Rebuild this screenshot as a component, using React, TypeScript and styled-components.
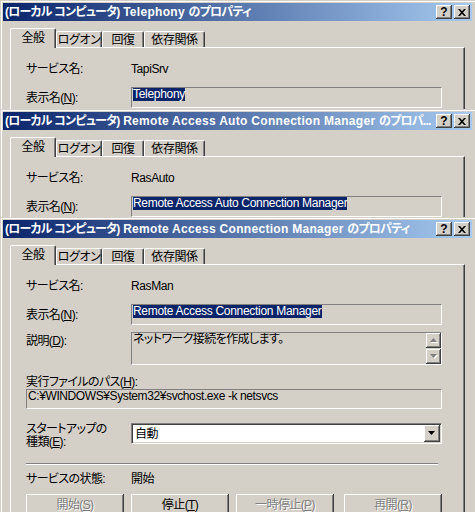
import React from 'react'
import styled, { createGlobalStyle } from 'styled-components'

const face = '#D4D0C8'
const shadow = '#808080'
const dark = '#404040'
const selection = '#0A246A'

const GlobalStyle = createGlobalStyle`
  html, body {
    margin: 0;
    padding: 0;
    background: ${face};
  }
  body {
    font-family: "Liberation Sans", "Noto Sans CJK JP", sans-serif;
    font-size: 12px;
    font-feature-settings: "palt";
    letter-spacing: -0.4px;
    color: #000;
  }
  * {
    box-sizing: border-box;
  }
`

const Desktop = styled.div`
  width: 475px;
  height: 512px;
  overflow: hidden;
  display: flex;
  flex-direction: column;
  background: ${face};
`

const Frame = styled.div<{ $height?: number }>`
  flex: ${({ $height }) => ($height ? 'none' : '1')};
  height: ${({ $height }) => ($height ? `${$height}px` : 'auto')};
  min-height: 0;
  width: 475px;
  overflow: hidden;
  padding: 3px 3px 0 3px;
  background: ${face};
  box-shadow: inset 1px 1px 0 ${face}, inset 2px 2px 0 #fff;
  display: flex;
  flex-direction: column;
`

const TitleBar = styled.div`
  flex: none;
  height: 18px;
  display: flex;
  align-items: center;
  padding: 0 2px 0 2px;
  background: linear-gradient(to right, ${selection}, #a6caf0);
  color: #fff;
  font-weight: bold;
`

const Caption = styled.span`
  flex: 1;
  min-width: 0;
  white-space: nowrap;
  overflow: hidden;
  letter-spacing: 0.3px;
  line-height: 18px;
`

// kana in the caption runs narrower than the latin part
const CaptionJp = styled.span`
  letter-spacing: -0.8px;
`

const CaptionButton = styled.div<{ $gap?: number }>`
  flex: none;
  width: 16px;
  height: 14px;
  margin-left: ${({ $gap }) => $gap ?? 0}px;
  background: ${face};
  box-shadow: inset -1px -1px 0 ${dark}, inset 1px 1px 0 #fff, inset -2px -2px 0 ${shadow};
  display: flex;
  align-items: center;
  justify-content: center;
  color: #000;
  font-family: "Liberation Sans", sans-serif;
  font-size: 12px;
  font-weight: bold;
  letter-spacing: 0;
  line-height: 14px;
`

const Body = styled.div`
  flex: 1;
  min-height: 0;
  display: flex;
  flex-direction: column;
  padding: 7px 7px 0 7px;
`

const TabStrip = styled.div`
  flex: none;
  height: 19px;
  display: flex;
  align-items: flex-start;
  position: relative;
  z-index: 1;
`

const Tab = styled.div<{ $active?: boolean; $w: number }>`
  width: ${({ $w }) => $w}px;
  height: ${({ $active }) => ($active ? 20 : 16)}px;
  margin-top: ${({ $active }) => ($active ? 0 : 3)}px;
  background: ${face};
  border-top: 1px solid #fff;
  border-left: 1px solid #fff;
  border-right: 1px solid ${dark};
  border-radius: 2px 2px 0 0;
  box-shadow: inset -1px 0 0 ${shadow};
  display: flex;
  justify-content: center;
  padding-top: ${({ $active }) => ($active ? 3 : 2)}px;
  line-height: 13px;
  white-space: nowrap;
`

const Panel = styled.div`
  flex: 1;
  min-height: 0;
  background: ${face};
  border-top: 1px solid #fff;
  border-left: 1px solid #fff;
  border-right: 1px solid ${dark};
  box-shadow: inset -1px 0 0 ${shadow};
  padding: 11px 22px 0 15px;
  display: flex;
  flex-direction: column;
`

const Row = styled.div<{ $top?: number; $h?: number; $align?: string }>`
  display: grid;
  grid-template-columns: 105px 1fr;
  align-items: ${({ $align }) => $align ?? 'center'};
  margin-top: ${({ $top }) => $top ?? 0}px;
  min-height: ${({ $h }) => $h ?? 14}px;
`

const Label = styled.div<{ $pad?: number }>`
  line-height: 14px;
  padding-top: ${({ $pad }) => $pad ?? 0}px;
  white-space: nowrap;
  letter-spacing: -0.6px;
`

const Value = styled.div`
  line-height: 14px;
  white-space: nowrap;
`

const StackLabel = styled.div`
  line-height: 13px;
  white-space: nowrap;
  letter-spacing: -0.6px;
`

const Wide = styled.div<{ $top?: number }>`
  margin-top: ${({ $top }) => $top ?? 0}px;
`

const Field = styled.div<{ $h: number }>`
  height: ${({ $h }) => $h}px;
  background: ${face};
  border-top: 1px solid ${shadow};
  border-left: 1px solid ${shadow};
  border-right: 1px solid #fff;
  border-bottom: 1px solid #fff;
  padding: 0 1px;
  line-height: 13px;
  white-space: nowrap;
  overflow: hidden;
`

const Selected = styled.span`
  background: ${selection};
  color: #fff;
  display: inline-block;
  line-height: 13px;
  letter-spacing: -0.3px;
`

const Memo = styled(Field)`
  display: flex;
  padding: 0 0 0 1px;
`

const MemoText = styled.div`
  flex: 1;
  min-width: 0;
  letter-spacing: -0.6px;
`

const ScrollBar = styled.div`
  flex: none;
  width: 15px;
  display: flex;
  flex-direction: column;
  justify-content: space-between;
`

const ArrowButton = styled.div`
  width: 15px;
  height: 15px;
  background: ${face};
  box-shadow: inset -1px -1px 0 ${dark}, inset 1px 1px 0 #fff, inset -2px -2px 0 ${shadow};
  display: flex;
  align-items: center;
  justify-content: center;
`

const Combo = styled.div`
  height: 21px;
  background: #fff;
  border-top: 1px solid ${shadow};
  border-left: 1px solid ${shadow};
  border-right: 1px solid #fff;
  border-bottom: 1px solid #fff;
  box-shadow: inset 1px 1px 0 ${dark}, inset -1px -1px 0 ${face};
  display: flex;
  align-items: center;
  padding: 1px 1px 1px 3px;
`

const ComboText = styled.div`
  flex: 1;
  line-height: 14px;
`

const DropButton = styled(ArrowButton)`
  width: 16px;
  height: 17px;
`

const Separator = styled.div<{ $top: number }>`
  margin-top: ${({ $top }) => $top}px;
  margin-right: 4px;
  height: 2px;
  border-top: 1px solid ${shadow};
  border-bottom: 1px solid #fff;
`

const ButtonRow = styled.div<{ $top: number }>`
  margin-top: ${({ $top }) => $top}px;
  display: flex;
  gap: 7px;

  & > :last-child {
    margin-left: auto;
  }
`

const PushButton = styled.div<{ $disabled?: boolean }>`
  width: 98px;
  height: 23px;
  background: ${face};
  box-shadow: inset -1px -1px 0 ${dark}, inset 1px 1px 0 #fff, inset -2px -2px 0 ${shadow};
  display: flex;
  align-items: center;
  justify-content: center;
  line-height: 14px;
  padding-bottom: 2px;
  letter-spacing: -0.6px;
  color: ${({ $disabled }) => ($disabled ? shadow : '#000')};
  text-shadow: ${({ $disabled }) => ($disabled ? '1px 1px 0 #fff' : 'none')};
`

const CloseGlyph = () => (
  <svg width="8" height="7" viewBox="0 0 8 7">
    <path d="M0 0h2l2 2.3L6 0h2L5 3.5 8 7H6L4 4.7 2 7H0l3-3.5z" fill="#000" />
  </svg>
)

const SmallArrow = ({ up, disabled }: { up?: boolean; disabled?: boolean }) => {
  const d = up ? 'M3.5 0L7 4H0z' : 'M0 0h7L3.5 4z'
  return (
    <svg width="8" height="5" viewBox="0 0 8 5">
      {disabled && <path d={d} fill="#fff" transform="translate(1 1)" />}
      <path d={d} fill={disabled ? shadow : '#000'} />
    </svg>
  )
}

const tabs: [string, number][] = [
  ['全般', 46],
  ['ログオン', 46],
  ['回復', 42],
  ['依存関係', 61],
]

type WindowProps = {
  name: string
  suffix: string
  height?: number
  children: React.ReactNode
}

function PropertyWindow({ name, suffix, height, children }: WindowProps) {
  return (
    <Frame $height={height}>
      <TitleBar>
        <Caption>
          <CaptionJp>(ローカル コンピュータ)</CaptionJp> {name} <CaptionJp>{suffix}</CaptionJp>
        </Caption>
        <CaptionButton>?</CaptionButton>
        <CaptionButton $gap={2}>
          <CloseGlyph />
        </CaptionButton>
      </TitleBar>
      <Body>
        <TabStrip>
          {tabs.map(([label, w], i) => (
            <Tab key={label} $w={w} $active={i === 0}>
              {label}
            </Tab>
          ))}
        </TabStrip>
        <Panel>{children}</Panel>
      </Body>
    </Frame>
  )
}

function NameRows({ service, display }: { service: string; display: string }) {
  return (
    <>
      <Row $h={20}>
        <Label>サービス名:</Label>
        <Value>{service}</Value>
      </Row>
      <Row $top={8} $h={21}>
        <Label>
          表示名(<u>N</u>):
        </Label>
        <Field $h={21}>
          <Selected>{display}</Selected>
        </Field>
      </Row>
    </>
  )
}

export default function App() {
  return (
    <>
      <GlobalStyle />
      <Desktop>
        <PropertyWindow name="Telephony" suffix="のプロパティ" height={109}>
          <NameRows service="TapiSrv" display="Telephony" />
        </PropertyWindow>
        <PropertyWindow name="Remote Access Auto Connection Manager" suffix="のプロパ..." height={108}>
          <NameRows service="RasAuto" display="Remote Access Auto Connection Manager" />
        </PropertyWindow>
        <PropertyWindow name="Remote Access Connection Manager" suffix="のプロパティ">
          <NameRows service="RasMan" display="Remote Access Connection Manager" />
          <Row $top={7} $h={33} $align="start">
            <Label $pad={2}>
              説明(<u>D</u>):
            </Label>
            <Memo $h={33}>
              <MemoText>ネットワーク接続を作成します。</MemoText>
              <ScrollBar>
                <ArrowButton>
                  <SmallArrow up disabled />
                </ArrowButton>
                <ArrowButton>
                  <SmallArrow disabled />
                </ArrowButton>
              </ScrollBar>
            </Memo>
          </Row>
          <Wide $top={10}>
            <Label>
              実行ファイルのパス(<u>H</u>):
            </Label>
          </Wide>
          <Wide>
            <Field $h={20}>C:¥WINDOWS¥System32¥svchost.exe -k netsvcs</Field>
          </Wide>
          <Row $top={14} $h={21} $align="start">
            <StackLabel>
              スタートアップの
              <br />
              種類(<u>E</u>):
            </StackLabel>
            <Combo>
              <ComboText>自動</ComboText>
              <DropButton>
                <SmallArrow />
              </DropButton>
            </Combo>
          </Row>
          <Separator $top={19} />
          <Row $top={7}>
            <Label>サービスの状態:</Label>
            <Label>開始</Label>
          </Row>
          <ButtonRow $top={8}>
            <PushButton $disabled>
              開始(<u>S</u>)
            </PushButton>
            <PushButton>
              停止(<u>T</u>)
            </PushButton>
            <PushButton $disabled>
              一時停止(<u>P</u>)
            </PushButton>
            <PushButton $disabled>
              再開(<u>R</u>)
            </PushButton>
          </ButtonRow>
        </PropertyWindow>
      </Desktop>
    </>
  )
}
